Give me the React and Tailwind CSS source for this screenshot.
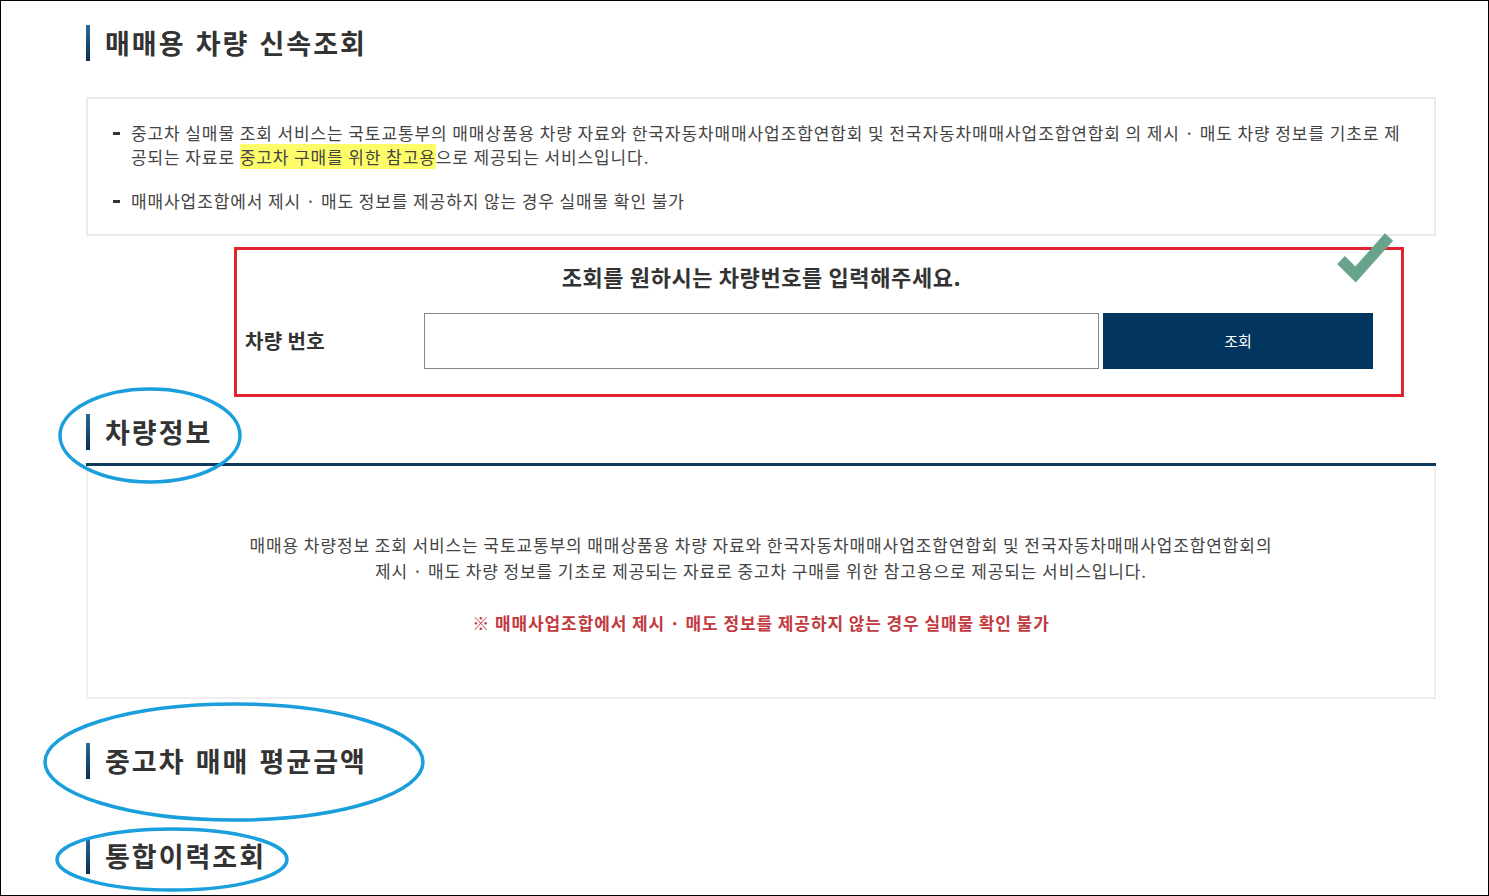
import React from 'react';

const FONT = "font-['Noto_Sans_CJK_KR','Noto_Sans',sans-serif]";

const SectionTitle = ({ children, className = '' }) => (
  <div className={`flex items-center h-[36px] ${className}`}>
    <span className="w-[4px] h-[36px] bg-gradient-to-b from-[#2a6a9a] to-[#0a2f4f]" />
    <h2 className="ml-[15px] text-[27px] leading-[36px] font-bold text-[#333] tracking-[2px] [word-spacing:2px]">
      {children}
    </h2>
  </div>
);

const Dash = () => <span className="shrink-0 w-[7px] h-[3px] bg-[#333] mt-[11px] mr-[11px]" />;

const CheckMark = () => (
  <svg className="absolute left-[1093px] top-[-23px]" width="66" height="60" viewBox="0 0 66 60">
    <polyline points="11,33 25.5,47.5 59,10" fill="none" stroke="#68a48b" strokeWidth="11" />
  </svg>
);

const Annotations = () => (
  <svg className="absolute inset-0 pointer-events-none" width="1489" height="896">
    <ellipse cx="149" cy="434.5" rx="90" ry="46.5" fill="none" stroke="#1a9fdc" strokeWidth="3.5" />
    <ellipse cx="233" cy="761" rx="189" ry="58" fill="none" stroke="#1a9fdc" strokeWidth="3.5" />
    <ellipse cx="171" cy="858.5" rx="115" ry="30.5" fill="none" stroke="#1a9fdc" strokeWidth="3.5" />
  </svg>
);

export default function App() {
  return (
    <div className={`relative w-[1489px] h-[896px] overflow-hidden bg-white border border-black ${FONT}`}>
      <div className="pl-[85px] pr-[52px] pt-[24px]">
        <SectionTitle>매매용 차량 신속조회</SectionTitle>

        {/* 안내 박스 */}
        <div className="mt-[36px] border-2 border-[#ebebeb] pt-[22px] pb-[21px] pl-[25px] pr-[10px] text-[17px] leading-[24px] text-[#444] tracking-[0.9px]">
          <div className="flex">
            <Dash />
            <p className="whitespace-nowrap">
              중고차 실매물 조회 서비스는 국토교통부의 매매상품용 차량 자료와 한국자동차매매사업조합연합회 및 전국자동차매매사업조합연합회 의 제시 · 매도 차량 정보를 기초로 제
              <br />
              공되는 자료로 <span className="bg-[#fdfd6a]">중고차 구매를 위한 참고용</span>으로 제공되는 서비스입니다.
            </p>
          </div>
          <div className="flex mt-[20px]">
            <Dash />
            <p>매매사업조합에서 제시 · 매도 정보를 제공하지 않는 경우 실매물 확인 불가</p>
          </div>
        </div>

        {/* 차량번호 조회 */}
        <div className="relative ml-[148px] mt-[11px] w-[1170px] border-[3px] border-[#e0232c] pt-[12px] pb-[25px]">
          <CheckMark />
          <div className="flex">
            <div className="w-[187px] shrink-0" />
            <p className="w-[675px] text-center text-[22px] leading-[28px] font-bold text-[#333] tracking-[0.6px]">
              조회를 원하시는 차량번호를 입력해주세요.
            </p>
          </div>
          <div className="flex items-center mt-[23px] pl-[8px]">
            <label className="w-[179px] text-[20px] font-bold text-[#333] tracking-[0.4px]">차량 번호</label>
            <input type="text" className="w-[675px] h-[56px] border border-[#888] bg-white" />
            <button className="ml-[4px] w-[270px] h-[56px] bg-[#03365f] text-white text-[15px]">조회</button>
          </div>
        </div>

        {/* 차량정보 */}
        <SectionTitle className="mt-[17px]">차량정보</SectionTitle>
        <div className="mt-[13px] h-[3px] bg-[#0b3a5e]" />
        <div className="border-2 border-t-0 border-[#efefef] pt-[66px] pb-[61px] text-center text-[17px] leading-[26px] text-[#444] tracking-[0.9px]">
          <p>
            매매용 차량정보 조회 서비스는 국토교통부의 매매상품용 차량 자료와 한국자동차매매사업조합연합회 및 전국자동차매매사업조합연합회의
            <br />
            제시 · 매도 차량 정보를 기초로 제공되는 자료로 중고차 구매를 위한 참고용으로 제공되는 서비스입니다.
          </p>
          <p className="mt-[26px] font-bold text-[#c23a40]">
            ※ 매매사업조합에서 제시 · 매도 정보를 제공하지 않는 경우 실매물 확인 불가
          </p>
        </div>

        <SectionTitle className="mt-[44px]">중고차 매매 평균금액</SectionTitle>
        <SectionTitle className="mt-[59px]">통합이력조회</SectionTitle>
      </div>
      <Annotations />
    </div>
  );
}
